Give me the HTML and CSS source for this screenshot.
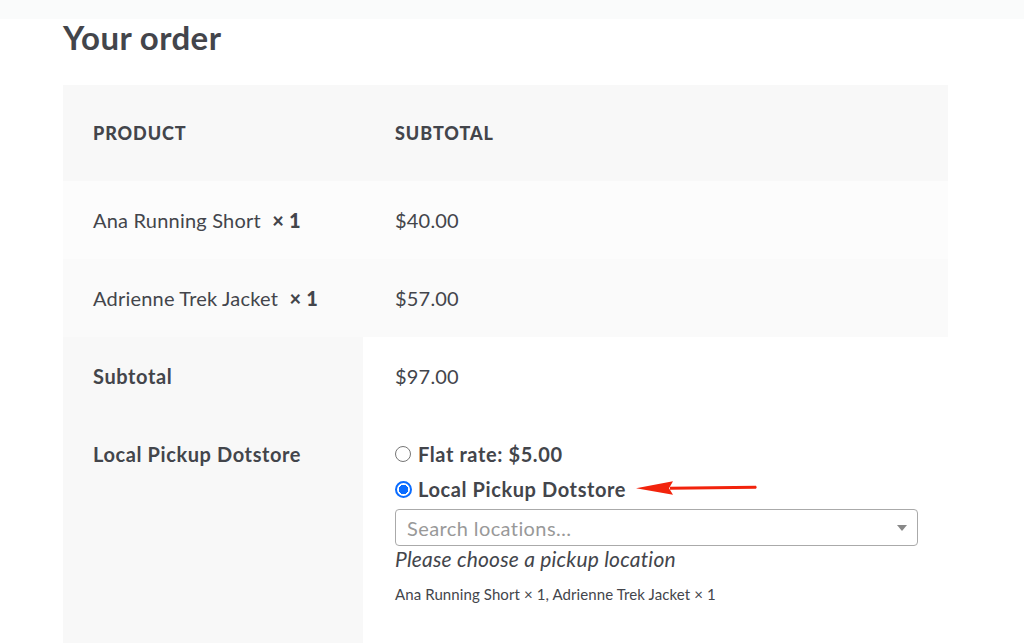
FILE: index.html
```html
<!DOCTYPE html>
<html lang="en">
<head>
<meta charset="utf-8">
<title>Your order</title>
<link rel="stylesheet" href="styles.css">
</head>
<body>
<div class="topbar"></div>
<main class="checkout">
  <h3 class="order-heading">Your order</h3>
  <table class="review-table">
    <thead>
      <tr>
        <th class="col-name">Product</th>
        <th class="col-total">Subtotal</th>
      </tr>
    </thead>
    <tbody>
      <tr class="item odd">
        <td class="col-name">Ana Running Short <strong class="qty">× 1</strong></td>
        <td class="col-total">$40.00</td>
      </tr>
      <tr class="item even">
        <td class="col-name">Adrienne Trek Jacket <strong class="qty">× 1</strong></td>
        <td class="col-total">$57.00</td>
      </tr>
    </tbody>
    <tfoot>
      <tr class="subtotal-row">
        <th>Subtotal</th>
        <td>$97.00</td>
      </tr>
      <tr class="shipping-row">
        <th>Local Pickup Dotstore</th>
        <td>
          <ul class="methods">
            <li class="method"><span class="radio"></span><span class="method-label">Flat rate: $5.00</span></li>
            <li class="method"><span class="radio checked"></span><span class="method-label">Local Pickup Dotstore</span>
              <svg class="annot-arrow" width="124" height="16" viewBox="0 0 124 16">
                <path d="M34 6.8 L120 5.8 Q121.5 7.3 120 8.8 L34 9.8 Z" fill="#f2230c"/>
                <path d="M0 8.2 L37 1.2 L33 8.2 L37 14.8 Z" fill="#f2230c"/>
              </svg>
            </li>
          </ul>
          <div class="location-select">
            <span class="placeholder">Search locations…</span>
            <span class="caret"></span>
          </div>
          <p class="hint">Please choose a pickup location</p>
          <p class="package">Ana Running Short × 1, Adrienne Trek Jacket × 1</p>
        </td>
      </tr>
    </tfoot>
  </table>
</main>
</body>
</html>
```

FILE: styles.css
```css
html, body {
  margin: 0;
  padding: 0;
  background: #ffffff;
}

body {
  font-family: "Lato", "Liberation Sans", sans-serif;
  color: #43454b;
  font-size: 20px;
  line-height: 26px;
  letter-spacing: 0.2px;
}

.topbar {
  height: 19px;
  background: #fafbfb;
}

.checkout {
  padding: 0 76px 0 63px;
}

.order-heading {
  margin: 0;
  font-size: 33px;
  line-height: 36px;
  font-weight: 700;
  letter-spacing: 0.4px;
  color: #43454b;
  padding-bottom: 30px;
}

.review-table {
  width: 885px;
  border-collapse: collapse;
  border-spacing: 0;
}

.review-table th,
.review-table td {
  text-align: left;
  vertical-align: top;
  padding: 26px 30px;
}

.review-table th.col-name,
.review-table td.col-name,
.review-table tfoot th {
  width: 240px;
}

.review-table .col-total,
.review-table tfoot td {
  padding-left: 32px;
}

.review-table thead th {
  background: #f8f8f8;
  text-transform: uppercase;
  font-weight: 900;
  font-size: 18px;
  letter-spacing: 0.9px;
  padding-top: 35px;
  padding-bottom: 35px;
}

.review-table tbody td {
  background: #fcfcfc;
}

.review-table tbody tr.even td {
  background: #fafafa;
}

.qty {
  font-weight: 900;
  margin-left: 6px;
}

.review-table tfoot th {
  background: #f8f8f8;
  font-weight: 700;
  letter-spacing: 0.6px;
}

.review-table tfoot td {
  background: #ffffff;
}

.shipping-row td {
  padding-bottom: 40px;
}

.methods {
  list-style: none;
  margin: 0;
  padding: 0;
}

.method {
  position: relative;
  display: flex;
  align-items: center;
  gap: 7px;
  height: 26px;
  margin-bottom: 9px;
  font-weight: 700;
  letter-spacing: 0.6px;
}

.radio {
  box-sizing: border-box;
  width: 16px;
  height: 16px;
  border-radius: 50%;
  border: 1px solid #767676;
  background: #fff;
  flex: none;
}

.radio.checked {
  width: 17px;
  height: 17px;
  border: 2px solid #0a6cff;
  background: radial-gradient(circle, #0a6cff 0 4.5px, #fff 5px);
}

.method .radio.checked + .method-label {
  margin-left: -1px;
}

.annot-arrow {
  position: absolute;
  left: 241px;
  top: 4px;
}

.location-select {
  box-sizing: border-box;
  width: 523px;
  height: 37px;
  margin-top: -2px;
  border: 1px solid #aaaaaa;
  border-radius: 4px;
  display: flex;
  align-items: center;
  justify-content: space-between;
  padding: 0 10px 0 11px;
}

.placeholder {
  color: #999999;
  font-size: 20px;
  letter-spacing: 0.4px;
}

.caret {
  width: 0;
  height: 0;
  border-left: 5px solid transparent;
  border-right: 5px solid transparent;
  border-top: 6px solid #888888;
}

.hint {
  margin: 0;
  font-style: italic;
  font-size: 21px;
  line-height: 26px;
}

.package {
  margin: 11px 0 0;
  font-size: 15px;
  line-height: 22px;
  letter-spacing: 0.1px;
}
```
